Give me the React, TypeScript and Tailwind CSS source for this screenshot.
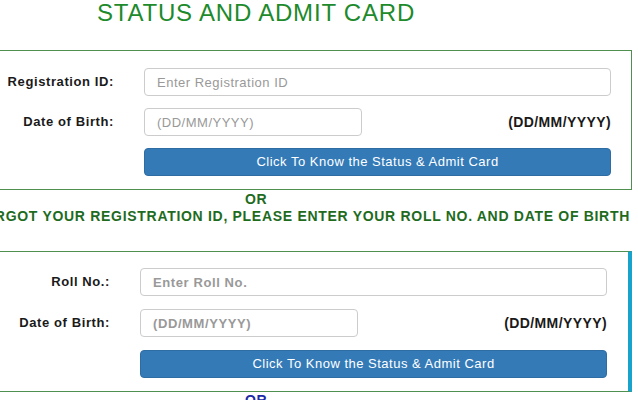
import React from 'react';

const font = "font-['Liberation_Sans',Arial,sans-serif]";

function Row({ label, children }: { label: string; children: React.ReactNode }) {
  return (
    <div className="flex items-center h-[28px]">
      <div className="flex-1 text-right pr-[30px] text-[13px] font-bold tracking-[0.6px] text-[#1a1a1a]">{label}</div>
      <div className="w-[467px] flex items-center">{children}</div>
    </div>
  );
}

function StatusForm({ idLabel, idPlaceholder, boldPlaceholder, last }: { idLabel: string; idPlaceholder: string; boldPlaceholder?: boolean; last?: boolean }) {
  const ph = boldPlaceholder ? 'placeholder:font-bold tracking-[0.6px]' : 'tracking-[0.5px]';
  return (
    <div
      className={
        last
          ? 'border border-[#4f8f4f] border-r-4 border-r-[#17a3cb] pr-[21px] pt-[16px] pb-[13px] flex flex-col gap-[13px]'
          : 'border border-[#4f8f4f] pr-[20px] pt-[17px] pb-[13px] flex flex-col gap-[12px]'
      }
    >
      <Row label={idLabel}>
        <input
          placeholder={idPlaceholder}
          className={`w-full h-[28px] border border-[#ccc] rounded-[4px] px-[12px] text-[13px] text-[#555] placeholder:text-[#999] outline-none ${ph}`}
        />
      </Row>
      <Row label="Date of Birth:">
        <input
          placeholder="(DD/MM/YYYY)"
          className={`w-[218px] h-[28px] border border-[#ccc] rounded-[4px] px-[12px] text-[13px] text-[#555] placeholder:text-[#999] outline-none ${ph}`}
        />
        <span className="flex-1 text-right text-[14px] font-bold tracking-[0.4px] text-[#1a1a1a]">(DD/MM/YYYY)</span>
      </Row>
      <Row label="">
        <button className="w-full h-[28px] rounded-[4px] bg-[#337ab7] border border-[#2e6da4] text-white text-[13px] tracking-[0.5px]">
          Click To Know the Status &amp; Admit Card
        </button>
      </Row>
    </div>
  );
}

export default function App() {
  return (
    <div className={`w-[638px] h-[400px] overflow-hidden bg-white ${font}`}>
      <div className="ml-[-120px] w-[752px]">
        {/* Title */}
        <h2 className="text-center text-[24px] leading-[26px] tracking-[0.8px] text-[#1d8a2c]">STATUS AND ADMIT CARD</h2>

        <div className="mt-[24px]">
          <StatusForm idLabel="Registration ID:" idPlaceholder="Enter Registration ID" />
        </div>

        <p className="mt-[1px] text-center text-[14px] leading-[16px] font-bold tracking-[0.6px] text-[#1e6b1e]">OR</p>
        <div className="flex justify-end pr-[2px]">
          <p className="whitespace-nowrap text-[14px] leading-[18px] font-bold tracking-[0.7px] text-[#1e6b1e]">
            IF YOU HAVE FORGOT YOUR REGISTRATION ID, PLEASE ENTER YOUR ROLL NO. AND DATE OF BIRTH
          </p>
        </div>

        <div className="mt-[26px]">
          <StatusForm idLabel="Roll No.:" idPlaceholder="Enter Roll No." boldPlaceholder last />
        </div>

        <p className="text-center text-[14px] leading-[16px] font-bold tracking-[0.6px] text-[#1c2aa8]">OR</p>
      </div>
    </div>
  );
}
